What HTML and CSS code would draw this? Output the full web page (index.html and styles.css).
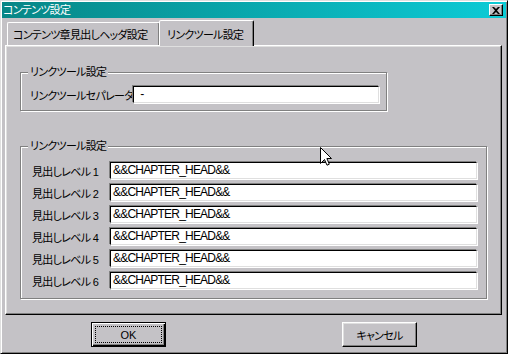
FILE: index.html
```html
<!DOCTYPE html>
<html lang="ja">
<head>
    <meta charset="UTF-8">
    <title>コンテンツ設定</title>
    <link rel="stylesheet" href="styles.css">
</head>
<body>

    <div class="window">
        <div class="titlebar">
            <span class="title">コンテンツ設定</span>
            <span class="close-btn">
                <svg width="8" height="7" viewBox="0 0 8 7"><path d="M0 0h2l2 2 2-2h2L5 3.5 8 7H6L4 5 2 7H0l3-3.5z" fill="#000"/></svg>
            </span>
        </div>

        <div class="client">
            <div class="tabs">
                <div class="tab">コンテンツ章見出しヘッダ設定</div>
                <div class="tab tab-active">リンクツール設定</div>
            </div>

            <div class="panel">
                <!-- separator -->
                <fieldset class="group group-sep">
                    <legend>リンクツール設定</legend>
                    <div class="row">
                        <span class="label">リンクツールセパレータ</span>
                        <div class="field field-sep">-</div>
                    </div>
                </fieldset>

                <!-- heading levels -->
                <fieldset class="group group-levels">
                    <legend>リンクツール設定</legend>
                    <div class="rows">
                        <div class="row"><span class="label">見出しレベル 1</span><div class="field">&amp;&amp;CHAPTER_HEAD&amp;&amp;</div></div>
                        <div class="row"><span class="label">見出しレベル 2</span><div class="field">&amp;&amp;CHAPTER_HEAD&amp;&amp;</div></div>
                        <div class="row"><span class="label">見出しレベル 3</span><div class="field">&amp;&amp;CHAPTER_HEAD&amp;&amp;</div></div>
                        <div class="row"><span class="label">見出しレベル 4</span><div class="field">&amp;&amp;CHAPTER_HEAD&amp;&amp;</div></div>
                        <div class="row"><span class="label">見出しレベル 5</span><div class="field">&amp;&amp;CHAPTER_HEAD&amp;&amp;</div></div>
                        <div class="row"><span class="label">見出しレベル 6</span><div class="field">&amp;&amp;CHAPTER_HEAD&amp;&amp;</div></div>
                    </div>
                </fieldset>
            </div>

            <div class="buttons">
                <div class="btn btn-default"><span class="focus">OK</span></div>
                <div class="btn"><span class="focus-none">キャンセル</span></div>
            </div>
        </div>

        <!-- mouse pointer -->
        <svg class="cursor" width="12" height="19" viewBox="0 0 12 19">
            <path d="M0.5 0.5V16.5L4.5 12.5L7 18.2L9.3 17.2L6.9 11.5H11.5Z" fill="#fff" stroke="#000" stroke-width="1"/>
        </svg>
    </div>

</body>
</html>
```

FILE: styles.css
```css
/* Base */
* {
    box-sizing: border-box;
}

body {
    margin: 0;
    background-color: #c4c2c6;
    font-family: "Liberation Sans", "Noto Sans CJK JP", sans-serif;
    font-size: 11px;
    letter-spacing: -0.7px;
    font-feature-settings: "palt";
    color: #000;
}

.window {
    position: relative;
    width: 508px;
    height: 354px;
    padding: 1px;
    border: 1px solid;
    border-color: #dfdfdf #000 #000 #dfdfdf;
    box-shadow: inset 1px 1px 0 #fff, inset -1px -1px 0 #808080;
    display: flex;
    flex-direction: column;
}

/* Title bar */
.titlebar {
    height: 16px;
    background: linear-gradient(to right, #078686, #0ccbd6);
    color: #fff;
    display: flex;
    align-items: center;
    justify-content: space-between;
    padding: 0 3px 0 1px;
}

.title {
    line-height: 16px;
}

.close-btn {
    width: 14px;
    height: 12px;
    background-color: #c4c2c6;
    border: 1px solid;
    border-color: #fff #000 #000 #fff;
    box-shadow: inset -1px -1px 0 #808080;
    display: flex;
    align-items: center;
    justify-content: center;
}

/* Client area */
.client {
    flex: 1;
    display: flex;
    flex-direction: column;
    padding: 2px 4px 0 3px;
}

.tabs {
    display: flex;
    align-items: flex-end;
    height: 25px;
    padding-left: 2px;
}

.tab {
    height: 23px;
    width: 153px;
    padding-left: 5px;
    border: 1px solid;
    border-bottom: none;
    border-color: #fff #000 transparent #fff;
    border-radius: 2px 2px 0 0;
    box-shadow: inset -1px 0 0 #808080;
    display: flex;
    align-items: center;
    white-space: nowrap;
}

.tab-active {
    position: relative;
    z-index: 1;
    height: 26px;
    width: 95px;
    margin-left: -1px;
    margin-bottom: -1px;
    padding-left: 7px;
    background-color: #c4c2c6;
}

.panel {
    height: 270px;
    border: 1px solid;
    border-color: #fff #000 #000 #fff;
    box-shadow: inset -1px -1px 0 #808080, inset 1px 1px 0 #dfdfdf;
    padding: 19px 0 0 14px;
}

/* Group boxes */
.group {
    margin: 0;
    padding: 0;
    border: 1px solid #808080;
    box-shadow: 1px 1px 0 #fff, inset 1px 1px 0 #fff;
    min-inline-size: 0;
}

.group legend {
    margin-left: 7px;
    padding: 0 2px;
    line-height: 15px;
    background-color: #c4c2c6;
}

.group-sep {
    width: 367px;
}

.group-sep .row {
    padding: 6px 8px 7px 9px;
}

.group-levels {
    width: 467px;
    margin-top: 28px;
}

.rows {
    display: flex;
    flex-direction: column;
    gap: 5px;
    padding: 8px 9px 9px 11px;
}

.row {
    display: flex;
    align-items: center;
}

.label {
    flex: 1;
    white-space: nowrap;
}

.field {
    flex: none;
    width: 367px;
    height: 17px;
    padding: 0 2px;
    background-color: #fff;
    border: 1px solid;
    border-color: #000 #dfdfdf #dfdfdf #000;
    box-shadow: -1px -1px 0 #808080, 1px 1px 0 #fff;
    font-size: 12px;
    letter-spacing: -0.8px;
    line-height: 15px;
    white-space: nowrap;
}

.field-sep {
    width: 246px;
    padding-left: 6px;
}

/* Buttons */
.buttons {
    display: flex;
    gap: 176px;
    margin-top: 7px;
    padding-left: 86px;
}

.btn {
    width: 75px;
    height: 25px;
    border: 1px solid;
    border-color: #fff #000 #000 #fff;
    box-shadow: inset -1px -1px 0 #808080, inset 1px 1px 0 #dfdfdf;
    display: flex;
    padding: 3px;
}

.btn-default {
    border-color: #000;
    box-shadow: inset 1px 1px 0 #fff, inset -1px -1px 0 #000, inset -2px -2px 0 #808080;
}

.focus, .focus-none {
    flex: 1;
    display: flex;
    align-items: center;
    justify-content: center;
}

.focus {
    border: 1px dotted #000;
    letter-spacing: 0;
}

.cursor {
    position: absolute;
    left: 319px;
    top: 146px;
}
```
